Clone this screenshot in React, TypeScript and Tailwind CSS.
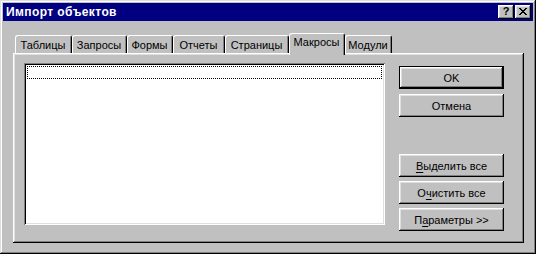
import React from 'react';

const raised =
  'shadow-[inset_-1px_-1px_#000,inset_1px_1px_#fff,inset_-2px_-2px_#808080,inset_2px_2px_#dfdfdf]';
const sunken =
  'shadow-[inset_1px_1px_#808080,inset_-1px_-1px_#fff,inset_2px_2px_#000,inset_-2px_-2px_#dfdfdf]';

const tabs = [
  { label: 'Таблицы', w: 'w-[57px]' },
  { label: 'Запросы', w: 'w-[55px]' },
  { label: 'Формы', w: 'w-[46px]' },
  { label: 'Отчеты', w: 'w-[52px]' },
  { label: 'Страницы', w: 'w-[64px]' },
  { label: 'Макросы', w: 'w-[56px]', active: true },
  { label: 'Модули', w: 'w-[47px]' },
];

function Tab({ label, w, active }: { label: string; w: string; active?: boolean }) {
  if (active) {
    return (
      <div className={`relative z-10 -mx-[2px] mb-[-2px] h-[22px] ${w} box-content px-[2px]`}>
        <div className="h-full w-full rounded-t-[3px] border-l border-t border-r border-l-white border-t-white border-r-black bg-[#c0c0c0] flex justify-center pt-[1px]">
          <div className="h-full w-full border-r border-r-[#808080] flex justify-center">
            {label}
          </div>
        </div>
      </div>
    );
  }
  return (
    <div className={`h-[18px] ${w} rounded-t-[3px] border-l border-t border-r border-l-white border-t-white border-r-black`}>
      <div className="h-full w-full border-r border-r-[#808080] flex justify-center pt-[2px]">{label}</div>
    </div>
  );
}

function Button({ children, isDefault }: { children: React.ReactNode; isDefault?: boolean }) {
  if (isDefault) {
    return (
      <div className="h-[23px] w-[105px] border border-black">
        <div className={`h-full w-full ${raised} flex items-center justify-center`}>{children}</div>
      </div>
    );
  }
  return (
    <div className={`h-[23px] w-[105px] ${raised} flex items-center justify-center`}>{children}</div>
  );
}

export default function App() {
  return (
    <div
      className="w-[536px] h-[254px] bg-[#c0c0c0] p-[3px] flex flex-col text-[11px] leading-[14px] text-black shadow-[inset_-1px_-1px_#000,inset_1px_1px_#dfdfdf,inset_-2px_-2px_#808080,inset_2px_2px_#fff]"
      style={{ fontFamily: '"Liberation Sans", Arial, sans-serif' }}
    >
      {/* Title bar */}
      <div className="h-[18px] bg-[#000080] flex items-center justify-between pl-[3px] pr-[2px]">
        <span className="text-white font-bold text-[12px] tracking-[0.4px]">Импорт объектов</span>
        <div className="flex gap-[1px]">
          <div className={`w-[16px] h-[14px] bg-[#c0c0c0] ${raised} flex items-center justify-center font-bold text-[11px] leading-none pb-[1px]`}>
            ?
          </div>
          <div className={`w-[16px] h-[14px] bg-[#c0c0c0] ${raised} flex items-center justify-center pb-[1px]`}>
            <svg width="8" height="7" viewBox="0 0 8 7" shapeRendering="crispEdges">
              <path d="M0 0h2v1h-2zM6 0h2v1h-2zM1 1h2v1h-2zM5 1h2v1h-2zM2 2h4v1h-4zM3 3h2v1h-2zM2 4h4v1h-4zM1 5h2v1h-2zM5 5h2v1h-2zM0 6h2v1h-2zM6 6h2v1h-2z" fill="#000" />
            </svg>
          </div>
        </div>
      </div>

      {/* Body */}
      <div className="pl-[10px] mt-[12px]">
        <div className="flex items-end h-[20px] pl-[2px]">
          {tabs.map((t) => (
            <Tab key={t.label} {...t} />
          ))}
        </div>
        <div className={`w-[511px] h-[190px] ${raised} flex pt-[10px] pl-[11px]`}>
          <div className={`w-[361px] h-[162px] bg-white ${sunken} p-[2px]`}>
            <div className="mt-[1px] mx-[1px] h-[13px] border border-dotted border-black" />
          </div>
          <div className="ml-[14px] pt-[3px] flex flex-col">
            <Button isDefault>OK</Button>
            <div className="mt-[5px]">
              <Button>Отмена</Button>
            </div>
            <div className="mt-[37px] flex flex-col gap-[4px]">
              <Button>
                <span>
                  <span className="underline underline-offset-2">В</span>ыделить все
                </span>
              </Button>
              <Button>
                <span>
                  О<span className="underline underline-offset-2">ч</span>истить все
                </span>
              </Button>
              <Button>
                <span>
                  П<span className="underline underline-offset-2">а</span>раметры &gt;&gt;
                </span>
              </Button>
            </div>
          </div>
        </div>
      </div>
    </div>
  );
}
